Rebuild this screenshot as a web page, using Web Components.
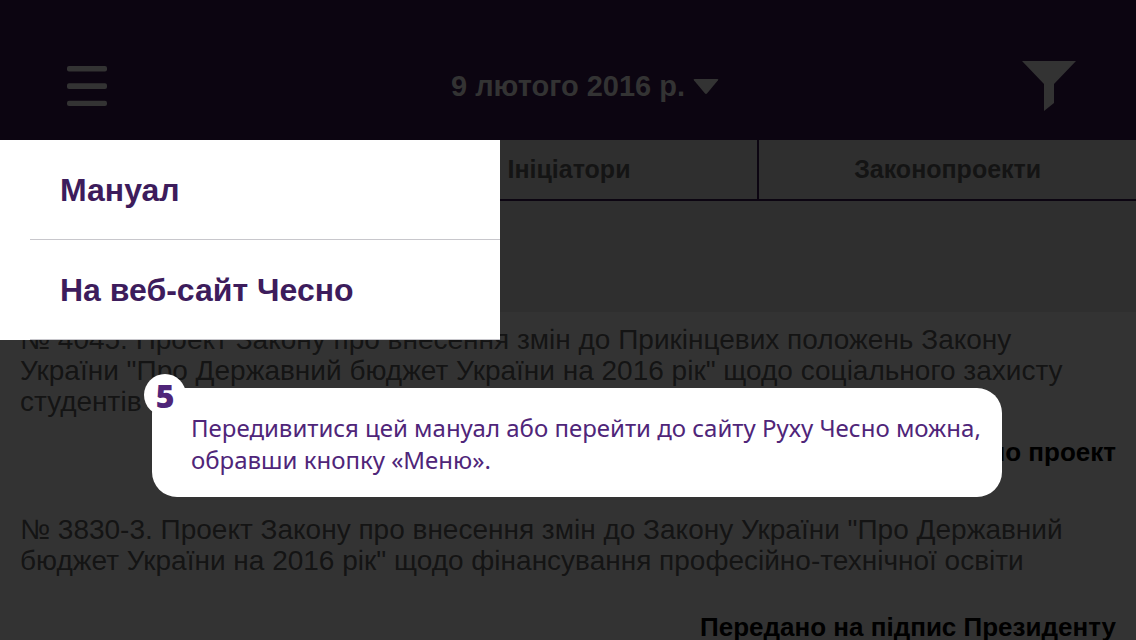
<!DOCTYPE html>
<html lang="uk">
<head>
<meta charset="utf-8">
<title>Чесно</title>
<style>
html { background: #333333; }
body { margin: 0; font-family: "Liberation Sans", Arial, sans-serif; color: #141414; }
</style>
</head>
<body>
<bills-app></bills-app>
<script>
class AppHeader extends HTMLElement {
  constructor() {
    super();
    this.attachShadow({ mode: "open" }).innerHTML = `
      <style>
        :host { display: block; background: #0c0511; color: #333333; }
        header { display: grid; grid-template-columns: 1fr auto 1fr; align-items: center; height: 140px; box-sizing: border-box; padding: 32px 60px 0; }
        button { all: unset; display: flex; align-items: center; cursor: pointer; }
        .menu { justify-self: start; padding-left: 7px; }
        .date { gap: 8px; padding-left: 34px; font-size: 29px; font-weight: bold; line-height: 34px; }
        .filter { justify-self: end; }
        svg { display: block; fill: currentColor; }
      </style>
      <header>
        <button class="menu" aria-label="Меню" aria-expanded="true">
          <svg width="40" height="40" viewBox="0 0 40 40"><rect width="40" height="5.4" rx="2"/><rect y="17.3" width="40" height="5.6" rx="2"/><rect y="34.8" width="40" height="5.2" rx="2"/></svg>
        </button>
        <button class="date"><slot></slot>
          <svg width="26" height="17" viewBox="0 0 26 17"><path d="M1.5 1H24.3Q26 1 25 2.3L14.2 15.2Q13 16.6 11.8 15.2L.9 2.3Q-.1 1 1.5 1Z"/></svg>
        </button>
        <button class="filter" aria-label="Фільтр">
          <svg width="54" height="50" viewBox="0 0 54 50"><path d="M0 0H54L32 23V42L22 50V23Z"/></svg>
        </button>
      </header>`;
  }
}
customElements.define("app-header", AppHeader);

class TabBar extends HTMLElement {
  constructor() {
    super();
    this.attachShadow({ mode: "open" }).innerHTML = `
      <style>
        :host { display: block; background: #2f2f2f; }
        nav { display: grid; grid-template-columns: repeat(3, 1fr); height: 61px; box-sizing: border-box; border-bottom: 2px solid #0c0511; }
      </style>
      <nav><slot></slot></nav>`;
  }
}
customElements.define("tab-bar", TabBar);

class TabItem extends HTMLElement {
  constructor() {
    super();
    this.attachShadow({ mode: "open" }).innerHTML = `
      <style>
        :host { display: flex; align-items: center; border-left: 2px solid #0c0511; }
        :host(:first-child) { border-left: 0; }
        button { all: unset; flex: 1; padding-bottom: 2px; text-align: center; font-size: 25px; font-weight: bold; line-height: 28px; cursor: pointer; }
      </style>
      <button><slot></slot></button>`;
  }
}
customElements.define("tab-item", TabItem);

class BillItem extends HTMLElement {
  constructor() {
    super();
    this.attachShadow({ mode: "open" }).innerHTML = `
      <style>
        :host { display: block; padding: 12px 20px 0; }
        p { margin: 0; font-size: 28px; line-height: 31px; }
        .title { min-height: 78px; }
        .status { margin: 20px 0 34px; font-size: 26px; font-weight: bold; text-align: right; color: #000000; }
      </style>
      <article><p class="title"><slot></slot></p><p class="status"><slot name="status"></slot></p></article>`;
  }
}
customElements.define("bill-item", BillItem);

class SideMenu extends HTMLElement {
  constructor() {
    super();
    this.attachShadow({ mode: "open" }).innerHTML = `
      <style>
        :host { display: block; box-sizing: border-box; background: #ffffff; padding-left: 30px; }
      </style>
      <nav><slot></slot></nav>`;
  }
}
customElements.define("side-menu", SideMenu);

class MenuLink extends HTMLElement {
  constructor() {
    super();
    this.attachShadow({ mode: "open" }).innerHTML = `
      <style>
        :host { display: block; border-bottom: 1px solid #c8c7cc; }
        a { display: block; padding: 2px 30px 0; color: #3d1c5c; font-size: 32px; font-weight: bold; line-height: 97px; text-decoration: none; }
      </style>
      <a href="#"><slot></slot></a>`;
  }
}
customElements.define("menu-link", MenuLink);

class HintCallout extends HTMLElement {
  constructor() {
    super();
    this.attachShadow({ mode: "open" }).innerHTML = `
      <style>
        :host { display: block; box-sizing: border-box; background: #ffffff; border-radius: 25px; padding: 24px 20px 21px 39px; color: #4f2579; font-family: "Noto Sans", "Open Sans", sans-serif; }
        p { margin: 0; font-size: 24px; line-height: 32px; }
        .step { position: absolute; left: -8px; top: -14px; width: 42px; height: 42px; border-radius: 50%; background: #ffffff; font-family: "Open Sans", "Noto Sans", sans-serif; font-size: 32px; font-weight: 800; line-height: 44px; text-align: center; }
      </style>
      <span class="step"><slot name="step"></slot></span>
      <p><slot></slot></p>`;
  }
}
customElements.define("hint-callout", HintCallout);

class BillsApp extends HTMLElement {
  constructor() {
    super();
    this.attachShadow({ mode: "open" }).innerHTML = `
      <style>
        :host { display: block; position: relative; height: 100vh; overflow: hidden; }
        .search { height: 111px; background: #2f2f2f; }
        side-menu { position: absolute; left: 0; top: 140px; width: 500px; }
        hint-callout { position: absolute; left: 152px; right: 134px; top: 388px; }
      </style>
      <app-header>9 лютого 2016 р.</app-header>
      <tab-bar>
        <tab-item></tab-item>
        <tab-item>Ініціатори</tab-item>
        <tab-item>Законопроекти</tab-item>
      </tab-bar>
      <div class="search"></div>
      <main>
        <bill-item>№ 4045. Проект Закону про внесення змін до Прикінцевих положень Закону України "Про Державний бюджет України на 2016 рік" щодо соціального захисту студентів<span slot="status">но проект</span></bill-item>
        <bill-item>№ 3830-3. Проект Закону про внесення змін до Закону України "Про Державний бюджет України на 2016 рік" щодо фінансування професійно-технічної освіти<span slot="status">Передано на підпис Президенту</span></bill-item>
      </main>
      <side-menu>
        <menu-link>Мануал</menu-link>
        <menu-link>На веб-сайт Чесно</menu-link>
      </side-menu>
      <hint-callout><span slot="step">5</span>Передивитися цей мануал або перейти до сайту Руху Чесно можна, обравши кнопку «Меню».</hint-callout>`;
  }
}
customElements.define("bills-app", BillsApp);
</script>
</body>
</html>
